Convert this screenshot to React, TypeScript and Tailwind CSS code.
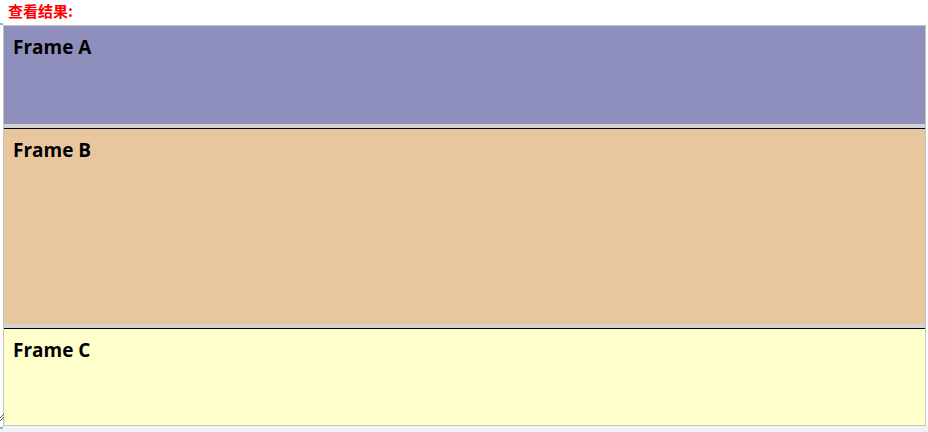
import React from "react";

const ff = { fontFamily: '"Open Sans", "Noto Sans", sans-serif' };

export default function App() {
  return (
    <div className="relative w-[928px] h-[432px] bg-white overflow-hidden">
      <div
        className="h-[25px] pl-2 pt-[1px] text-[15px] leading-[20px] font-bold text-[#ff0000]"
        style={{ fontFamily: '"Noto Sans CJK SC", "Liberation Sans", sans-serif' }}
      >
        查看结果:
      </div>
      <div className="ml-[3px] w-[923px] border border-[#c4c4c4] flex flex-col">
        <div className="bg-[#8f8fbd] h-[98px] px-[9px] pt-[9px]">
          <div className="text-[19px] leading-[24px] font-bold text-black" style={ff}>
            Frame A
          </div>
        </div>
        <div className="h-[4px] bg-[#d3d3d3]" />
        <div className="h-[1px] bg-black" />
        <div className="bg-[#e9c79e] h-[195px] px-[9px] pt-[9px]">
          <div className="text-[19px] leading-[24px] font-bold text-black" style={ff}>
            Frame B
          </div>
        </div>
        <div className="h-[4px] bg-[#d3d3d3]" />
        <div className="h-[1px] bg-black" />
        <div className="bg-[#ffffcc] h-[96px] px-[9px] pt-[9px]">
          <div className="text-[19px] leading-[24px] font-bold text-black" style={ff}>
            Frame C
          </div>
        </div>
      </div>
      <div className="h-[6px] bg-[#f2f2f2]" />
      <div className="absolute left-0 top-[23px] w-[3px] h-[2px] bg-[#8ab4e8]" />
      <div className="absolute left-0 top-[427px] w-[3px] h-[2px] bg-[#8ab4e8]" />
      <svg className="absolute left-0 top-[414px]" width="4" height="8" viewBox="0 0 4 8">
        <path d="M0 4 L4 0 M0 7 L4 3" stroke="#555" strokeWidth="1" />
      </svg>
    </div>
  );
}
